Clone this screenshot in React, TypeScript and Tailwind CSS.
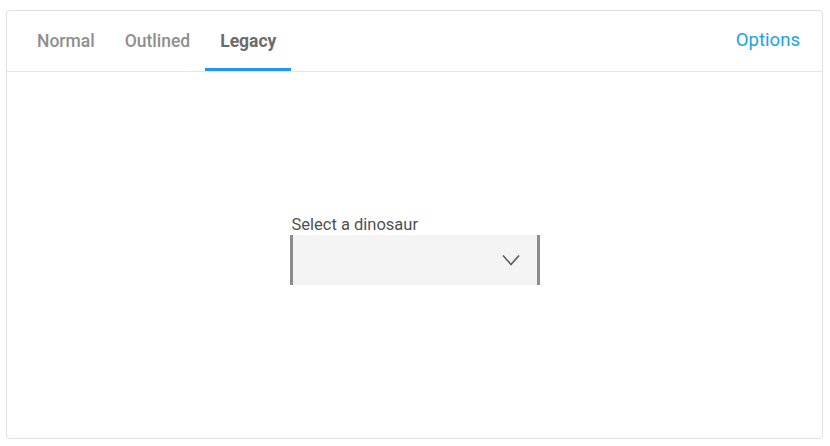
import { useState } from "react";

const TABS = ["Normal", "Outlined", "Legacy"] as const;

export default function App() {
  const [active, setActive] = useState<string>("Legacy");

  return (
    <div className="h-[446px] w-[830px] bg-white p-[6px] pt-[10px] font-['Roboto',sans-serif]">
      <div className="flex h-[429px] w-[817px] flex-col rounded border border-[#e0e0e0] bg-white">
        <div className="flex h-[61px] items-stretch justify-between border-b border-[#e4e4e4] pl-[15px] pr-[22px]">
          <div className="flex">
            {TABS.map((tab) => (
              <button
                key={tab}
                type="button"
                onClick={() => setActive(tab)}
                className={`relative px-[15px] text-[17.5px] ${
                  active === tab ? "font-bold text-[#6b6b6b]" : "font-medium text-[#8f8f8f]"
                }`}
              >
                {tab}
                {active === tab && (
                  <span className="absolute bottom-0 left-0 h-[3px] w-full bg-[#2196f3]" />
                )}
              </button>
            ))}
          </div>
          <button type="button" className="text-[18.6px] text-[#1aa3e8]">
            Options
          </button>
        </div>

        <div className="flex flex-1 items-center justify-center pb-[10px]">
          <div className="flex w-[250px] flex-col">
            <label className="mb-[1px] pl-[2px] text-[16.5px] font-normal leading-[19px] text-[#505050]">
              Select a dinosaur
            </label>
            <div className="flex h-[50px] items-center justify-end border-x-[3px] border-[#8c8c8c] bg-[#f4f4f4] pr-[17px]">
              <svg width="18" height="12" viewBox="0 0 18 12" fill="none">
                <path d="M1 1.5 L9 10.5 L17 1.5" stroke="#5a5a5a" strokeWidth="1.6" />
              </svg>
            </div>
          </div>
        </div>
      </div>
    </div>
  );
}
